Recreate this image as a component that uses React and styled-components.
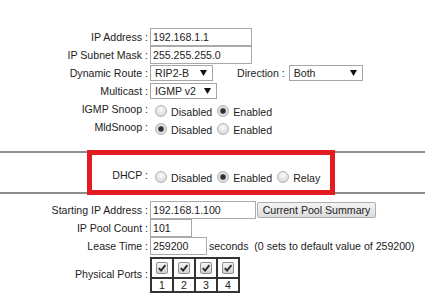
import React from "react";
import styled, { createGlobalStyle } from "styled-components";

const GlobalStyle = createGlobalStyle`
  html, body {
    margin: 0;
    padding: 0;
    background: #ffffff;
  }
  body {
    font-family: "Liberation Sans", Arial, sans-serif;
    font-size: 10.6px;
    color: #1c1c1c;
  }
`;

const Arrow = () => (
  <svg width="7" height="6" viewBox="0 0 7 6">
    <path d="M0 0h7L3.5 6z" fill="#111" />
  </svg>
);

const Tick = () => (
  <svg width="10" height="10" viewBox="0 0 10 10">
    <path d="M1.8 5.2 L4.1 7.6 L8.4 2.2" fill="none" stroke="#2a2a2a" strokeWidth="1.9" />
  </svg>
);

const RadioSet = ({ options, selected }) => (
  <>
    {options.map((o) => (
      <Choice key={o}>
        <Radio $on={o === selected} />
        <ChoiceText>{o}</ChoiceText>
      </Choice>
    ))}
  </>
);

export default function App() {
  return (
    <Page>
      <GlobalStyle />
      <Section $pad="28px 0 15px">
        <Form>
          <Label>IP Address :</Label>
          <Value>
            <TextBox $w={102} value="192.168.1.1" />
          </Value>
          <Label>IP Subnet Mask :</Label>
          <Value>
            <TextBox $w={102} value="255.255.255.0" />
          </Value>
          <Label>Dynamic Route :</Label>
          <Value>
            <Select $w={63}>
              RIP2-B
              <Arrow />
            </Select>
            <Inline $ml={24}>Direction :</Inline>
            <Select $w={74} $ml={4}>
              Both
              <Arrow />
            </Select>
          </Value>
          <Label>Multicast :</Label>
          <Value>
            <Select $w={67}>
              IGMP v2
              <Arrow />
            </Select>
          </Value>
          <Label>IGMP Snoop :</Label>
          <Value $align="flex-start">
            <RadioSet options={["Disabled", "Enabled"]} selected="Enabled" />
          </Value>
          <Label>MldSnoop :</Label>
          <Value $align="flex-start">
            <RadioSet options={["Disabled", "Enabled"]} selected="Disabled" />
          </Value>
        </Form>
      </Section>

      <Band>
        <Form>
          <Label>DHCP :</Label>
          <Value $align="flex-start">
            <RadioSet options={["Disabled", "Enabled", "Relay"]} selected="Enabled" />
          </Value>
        </Form>
        <Highlight />
      </Band>

      <Section $pad="7px 0 0">
        <Form>
          <Label>Starting IP Address :</Label>
          <Value>
            <TextBox $w={106} value="192.168.1.100" />
            <Button>Current Pool Summary</Button>
          </Value>
          <Label>IP Pool Count :</Label>
          <Value>
            <TextBox $w={42} value="101" />
          </Value>
          <Label>Lease Time :</Label>
          <Value>
            <TextBox $w={57} value="259200" />
            <Inline $ml={2}>seconds&nbsp; (0 sets to default value of 259200)</Inline>
          </Value>
          <Label $middle>Physical Ports :</Label>
          <Value $auto>
            <Ports>
              <tbody>
                <tr>
                  {[1, 2, 3, 4].map((n) => (
                    <Cell key={n}>
                      <CheckSlot>
                        <Check>
                          <Tick />
                        </Check>
                      </CheckSlot>
                    </Cell>
                  ))}
                </tr>
                <tr>
                  {[1, 2, 3, 4].map((n) => (
                    <Cell key={n}>
                      <NumSlot>{n}</NumSlot>
                    </Cell>
                  ))}
                </tr>
              </tbody>
            </Ports>
          </Value>
        </Form>
      </Section>
    </Page>
  );
}

const Page = styled.div`
  width: 425px;
  height: 303px;
  overflow: hidden;
  background: #ffffff;
`;

const Section = styled.div`
  padding: ${(p) => p.$pad};
`;

const Form = styled.div`
  display: grid;
  grid-template-columns: 148px auto;
  column-gap: 2px;
  justify-content: start;
`;

const Label = styled.div`
  height: 18px;
  line-height: 18px;
  text-align: right;
  white-space: nowrap;
  align-self: ${(p) => (p.$middle ? "center" : "start")};
`;

const Value = styled.div`
  display: flex;
  align-items: ${(p) => p.$align || "center"};
  height: ${(p) => (p.$auto ? "auto" : "18px")};
  margin-top: ${(p) => (p.$auto ? "2px" : "0")};
  white-space: nowrap;
`;

const Inline = styled.span`
  margin-left: ${(p) => p.$ml || 0}px;
  line-height: 18px;
`;

const TextBox = styled.input.attrs({ type: "text", readOnly: true })`
  box-sizing: border-box;
  width: ${(p) => p.$w}px;
  height: 18px;
  margin: 0;
  padding: 0 2px;
  border: 1px solid #a9a9a9;
  background: #ffffff;
  font: inherit;
  color: #222222;
  outline: none;
`;

const Select = styled.div`
  box-sizing: border-box;
  width: ${(p) => p.$w}px;
  height: 16px;
  margin-left: ${(p) => p.$ml || 0}px;
  padding: 0 5px 0 4px;
  border: 1px solid #a6a6a6;
  background: #ffffff;
  display: flex;
  align-items: center;
  justify-content: space-between;
  line-height: 14px;
  color: #222222;
`;

const Choice = styled.span`
  display: flex;
  align-items: flex-start;
`;

const Radio = styled.span`
  flex: none;
  box-sizing: border-box;
  width: 12px;
  height: 12px;
  margin: 5px 4px 0 5px;
  border-radius: 50%;
  border: 1px solid #b2b2b2;
  background: ${(p) =>
    p.$on
      ? "radial-gradient(circle, #2e2e2e 0 2px, #6f6f6f 2.6px, #e4e4e4 3.6px, #d0d0d0 100%)"
      : "radial-gradient(circle at 50% 35%, #fbfbfb 0, #e6e6e6 50%, #cdcdcd 100%)"};
`;

const ChoiceText = styled.span`
  line-height: 18px;
  padding-top: 3px;
`;

const Band = styled.div`
  position: relative;
  border-top: 2px solid #8d8d8d;
  border-bottom: 2px solid #8d8d8d;
  padding: 13px 0 8px;
`;

const Highlight = styled.div`
  position: absolute;
  left: 87px;
  top: -3px;
  width: 248px;
  height: 45px;
  box-sizing: border-box;
  border: 5px solid #e31b23;
  pointer-events: none;
`;

const Button = styled.button`
  box-sizing: border-box;
  width: 119px;
  height: 16px;
  margin: 0 0 0 1px;
  padding: 0;
  border: 1px solid #adadad;
  border-radius: 2px;
  background: linear-gradient(#f4f4f4, #dcdcdc);
  font: inherit;
  line-height: 14px;
  color: #222222;
`;

const Ports = styled.table`
  border-collapse: separate;
  border-spacing: 0;
  border: 1px solid #333333;
`;

const Cell = styled.td`
  border: 1px solid #333333;
  padding: 0;
`;

const CheckSlot = styled.div`
  width: 20px;
  height: 18px;
  display: flex;
  align-items: center;
  justify-content: center;
`;

const Check = styled.span`
  box-sizing: border-box;
  width: 12px;
  height: 12px;
  border: 1px solid #8f8f8f;
  border-radius: 2px;
  background: linear-gradient(#f4f4f4, #d2d2d2);
  display: flex;
  align-items: center;
  justify-content: center;
`;

const NumSlot = styled.div`
  width: 20px;
  height: 12px;
  line-height: 12px;
  text-align: center;
`;
